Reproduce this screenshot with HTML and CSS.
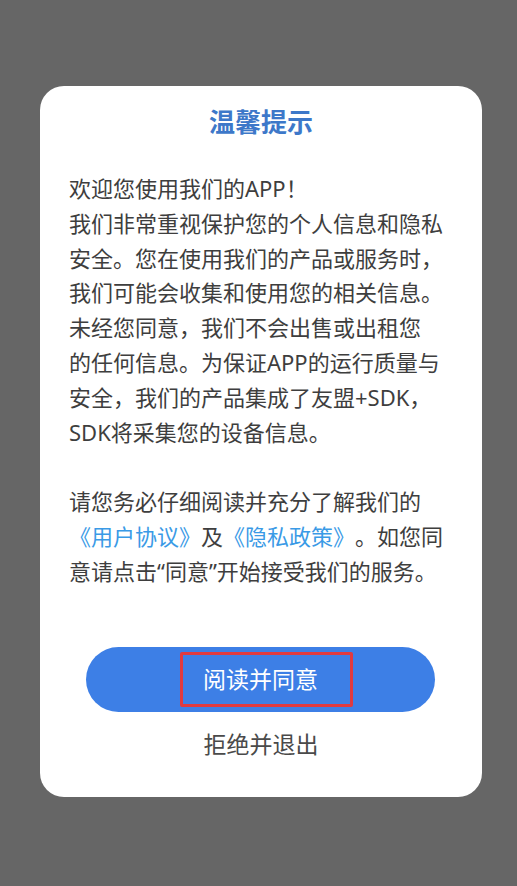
FILE: index.html
```html
<!DOCTYPE html>
<html lang="zh-CN">
<head>
<meta charset="utf-8">
<title>温馨提示</title>
<link rel="stylesheet" href="styles.css">
</head>
<body>
<div class="screen">
  <div class="dialog">
    <h1 class="title">温馨提示</h1>
    <div class="content">
      <p class="para">欢迎您使用我们的APP！<br>我们非常重视保护您的个人信息和隐私<br>安全。您在使用我们的产品或服务时，<br>我们可能会收集和使用您的相关信息。<br>未经您同意，我们不会出售或出租您<br>的任何信息。为保证APP的运行质量与<br>安全，我们的产品集成了友盟+SDK，<br>SDK将采集您的设备信息。</p>
      <p class="para gap">请您务必仔细阅读并充分了解我们的<br><span class="link">《用户协议》</span>及<span class="link">《隐私政策》</span>。如您同<br>意请点击“同意”开始接受我们的服务。</p>
    </div>
    <div class="actions">
      <button class="agree"><span class="mark">阅读并同意</span></button>
      <button class="refuse">拒绝并退出</button>
    </div>
  </div>
</div>
</body>
</html>
```

FILE: styles.css
```css
html, body {
  margin: 0;
  padding: 0;
}

body {
  background: #666666;
  font-family: "Noto Sans", "Noto Sans CJK SC", sans-serif;
  width: 517px;
  height: 886px;
  overflow: hidden;
  text-spacing-trim: space-all;
}

.screen {
  padding: 86px 35px 0 40px;
}

.dialog {
  box-sizing: border-box;
  width: 442px;
  height: 711px;
  background: #ffffff;
  border-radius: 24px;
  padding: 18px 29px 0 29px;
  display: flex;
  flex-direction: column;
}

.title {
  margin: 0;
  text-align: center;
  font-size: 26px;
  line-height: 36px;
  font-weight: 700;
  color: #3d78c9;
}

.content {
  margin-top: 31px;
}

.para {
  margin: 0;
  font-size: 22px;
  line-height: 34.8px;
  color: #3e3e3e;
  white-space: nowrap;
}

.para.gap {
  margin-top: 34.8px;
}

.link {
  color: #3a9ae6;
}

.actions {
  margin-top: 58px;
  display: flex;
  flex-direction: column;
  align-items: center;
}

.agree {
  width: 349px;
  height: 65px;
  border: none;
  border-radius: 33px;
  background: #3d7fe6;
  display: flex;
  align-items: center;
  justify-content: center;
  padding: 0;
  margin-left: 17px;
  align-self: flex-start;
  font-family: inherit;
}

.mark {
  display: inline-block;
  box-sizing: border-box;
  height: 55px;
  line-height: 49px;
  padding: 0 32px 0 20px;
  margin-left: 12px;
  border: 3px solid #e03a40;
  border-radius: 2px;
  color: #ffffff;
  font-size: 23px;
}

.refuse {
  margin-top: 15px;
  border: none;
  background: none;
  padding: 0;
  font-family: inherit;
  font-size: 23px;
  line-height: 34px;
  color: #4a4a4a;
}
```
